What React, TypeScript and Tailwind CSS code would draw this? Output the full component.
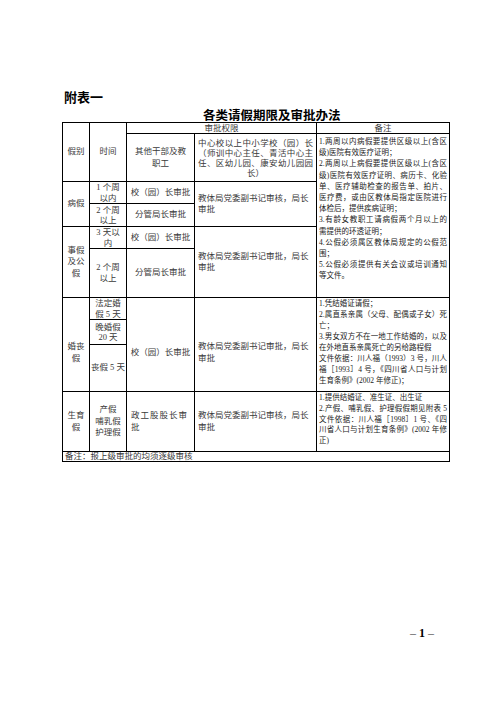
import React from 'react';

// Leave-approval table (附表一), laid out as a real table with row/col spans

const td = 'border border-black p-0';
const mid = 'border border-black p-0 text-center';

function J({ children }: { children: React.ReactNode }) {
  // a full line, justified edge to edge
  return <div className="whitespace-nowrap text-justify [text-align-last:justify]">{children}</div>;
}

function L({ children }: { children: React.ReactNode }) {
  return <div className="whitespace-nowrap">{children}</div>;
}

export default function App() {
  return (
    <div className="relative h-[702px] w-[496px] overflow-hidden bg-white">
      <div className="pl-[64px] pt-[89px] text-[13px] font-bold leading-[16px] text-black [font-family:'Noto_Sans_CJK_SC',sans-serif]">
        附表一
      </div>
      <div className="ml-[203px] mt-[2px] text-[12.5px] font-bold leading-[15px] text-black [font-family:'Noto_Sans_CJK_SC',sans-serif]">
        各类请假期限及审批办法
      </div>

      <table className="ml-[62px] w-[387px] table-fixed border-collapse text-[8.5px] leading-[11.5px] text-[#3a3a3a] [font-family:'Liberation_Serif','Noto_Sans_CJK_SC',serif]">
        <colgroup>
          <col className="w-[27px]" />
          <col className="w-[37px]" />
          <col className="w-[68px]" />
          <col className="w-[122px]" />
          <col className="w-[133px]" />
        </colgroup>
        <tbody>
          <tr className="h-[11px]">
            <td rowSpan={2} className={mid}>假别</td>
            <td rowSpan={2} className={mid}>时间</td>
            <td colSpan={2} className={`${mid} leading-[10px]`}>审批权限</td>
            <td className={`${mid} leading-[10px]`}>备注</td>
          </tr>
          <tr className="h-[48px]">
            <td className={`${mid} px-[5px]`}>
              其他干部及教
              <br />
              职工
            </td>
            <td className={`${td} px-[3px] leading-[10px]`}>
              <J>中心校以上中小学校（园）长</J>
              <J>（师训中心主任、青活中心主</J>
              <J>任、区幼儿园、康安幼儿园园</J>
              <div className="text-center">长）</div>
            </td>
            <td rowSpan={5} className={`${td} px-[2px] pt-[2px] align-top text-[7.5px] leading-[11.2px] text-[#222]`}>
              <J>1.两周以内病假要提供区级以上(含区</J>
              <L>级)医院有效医疗证明；</L>
              <J>2.两周以上病假要提供区级以上(含区</J>
              <J>级)医院有效医疗证明、病历卡、化验</J>
              <J>单、医疗辅助检查的报告单、拍片、</J>
              <J>医疗费，或由区教体局指定医院进行</J>
              <L>体检后，提供疾病证明；</L>
              <J>3.有龄女教职工请病假两个月以上的</J>
              <L>需提供的环透证明；</L>
              <J>4.公假必须属区教体局规定的公假范</J>
              <L>围；</L>
              <J>5.公假必须提供有关会议或培训通知</J>
              <L>等文件。</L>
            </td>
          </tr>

          {/* 病假 */}
          <tr className="h-[22px]">
            <td rowSpan={2} className={mid}>病假</td>
            <td className={`${mid} leading-[10.5px]`}>
              1 个周
              <br />
              以内
            </td>
            <td className={mid}>校（园）长审批</td>
            <td rowSpan={2} className={`${td} pl-[3px]`}>
              教体局党委副书记审核，局长
              <br />
              审批
            </td>
          </tr>
          <tr className="h-[23px]">
            <td className={`${mid} leading-[10.5px]`}>
              2 个周
              <br />
              以上
            </td>
            <td className={mid}>分管局长审批</td>
          </tr>

          {/* 事假及公假 */}
          <tr className="h-[22px]">
            <td rowSpan={2} className={mid}>
              事假
              <br />
              及公
              <br />
              假
            </td>
            <td className={`${mid} leading-[10.5px]`}>
              3 天以
              <br />
              内
            </td>
            <td className={mid}>校（园）长审批</td>
            <td rowSpan={2} className={`${td} pl-[3px]`}>
              教体局党委副书记审批，局长
              <br />
              审批
            </td>
          </tr>
          <tr className="h-[49px]">
            <td className={mid}>
              2 个周
              <br />
              以上
            </td>
            <td className={mid}>分管局长审批</td>
          </tr>

          {/* 婚丧假 */}
          <tr className="h-[22px]">
            <td rowSpan={3} className={`${mid} pt-[16px]`}>
              婚丧
              <br />
              假
            </td>
            <td className={`${mid} leading-[10.5px]`}>
              法定婚
              <br />
              假 5 天
            </td>
            <td rowSpan={3} className={`${mid} pt-[16px]`}>校（园）长审批</td>
            <td rowSpan={3} className={`${td} pl-[3px] pt-[16px]`}>
              教体局党委副书记审批，局长
              <br />
              审批
            </td>
            <td rowSpan={3} className={`${td} px-[2px] align-top text-[7.5px] leading-[11px] text-[#222]`}>
              <L>1.凭结婚证请假；</L>
              <J>2.属直系亲属（父母、配偶或子女）死</J>
              <L>亡；</L>
              <J>3.男女双方不在一地工作结婚的，以及</J>
              <L>在外地直系亲属死亡的另给路程假</L>
              <J>文件依据：川人福（1993）3 号，川人</J>
              <J>福［1993］4 号，《四川省人口与计划</J>
              <L>生育条例》(2002 年修正)；</L>
            </td>
          </tr>
          <tr className="h-[25px]">
            <td className={`${mid} leading-[10.5px]`}>
              晚婚假
              <br />
              20 天
            </td>
          </tr>
          <tr className="h-[47px]">
            <td className={`${mid} whitespace-nowrap`}>丧假 5 天</td>
          </tr>

          {/* 生育假 */}
          <tr className="h-[60px]">
            <td className={mid}>
              生育
              <br />
              假
            </td>
            <td className={mid}>
              产假
              <br />
              哺乳假
              <br />
              护理假
            </td>
            <td className={`${td} pl-[4px] tracking-[1px]`}>
              政工股股长审
              <br />
              批
            </td>
            <td className={`${td} pl-[3px]`}>
              教体局党委副书记审核，局长
              <br />
              审批
            </td>
            <td className={`${td} px-[2px] pt-[1px] align-top text-[7.5px] leading-[10.8px] text-[#222]`}>
              <L>1.提供结婚证、准生证、出生证</L>
              <J>2.产假、哺乳假、护理假假期见附表 5</J>
              <J>文件依据：川人福［1998］1 号、《四</J>
              <J>川省人口与计划生育条例》(2002 年修</J>
              <L>正)</L>
            </td>
          </tr>

          <tr className="h-[10px]">
            <td colSpan={5} className={`${td} pl-[2px] leading-[9px]`}>
              备注：报上级审批的均须逐级审核
            </td>
          </tr>
        </tbody>
      </table>

      <div className="ml-[407px] mt-[164px] flex w-[30px] items-center justify-center gap-[3px] text-[12px] leading-[14px] text-black [font-family:'Liberation_Serif',serif]">
        <span className="font-light text-[#555]">–</span>
        <span className="font-bold">1</span>
        <span className="font-light text-[#555]">–</span>
      </div>
    </div>
  );
}
